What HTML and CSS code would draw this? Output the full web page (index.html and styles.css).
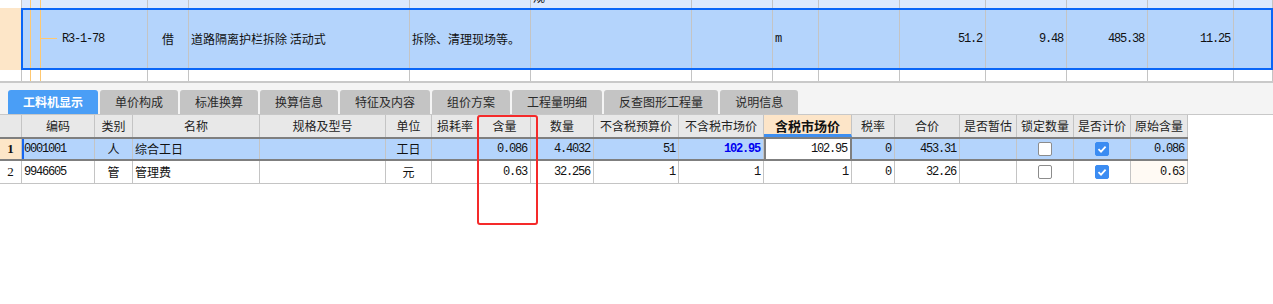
FILE: index.html
```html
<!DOCTYPE html>
<html lang="zh">
<head>
<meta charset="utf-8">
<title>工料机显示</title>
<link rel="stylesheet" href="styles.css">
</head>
<body>
<div class="top">
  <div class="trow ra">
    <div class="c gut"></div>
    <div class="c t1 tree"></div>
    <div class="c t2"></div>
    <div class="c t3"></div>
    <div class="c t4"></div>
    <div class="c t5 clip"><span class="peek">规</span></div>
    <div class="c t6"></div>
    <div class="c t7"></div>
    <div class="c t8"></div>
    <div class="c t9"></div>
    <div class="c t10"></div>
    <div class="c t11"></div>
    <div class="c t12"></div>
    <div class="c t13"></div>
  </div>
  <div class="trow rb">
    <div class="c gut peach"></div>
    <div class="c t1 tree branch"><span class="mono code">R3-1-78</span></div>
    <div class="c t2 ctr">借</div>
    <div class="c t3 pl">道路隔离护栏拆除 活动式</div>
    <div class="c t4 pl">拆除、清理现场等。</div>
    <div class="c t5"></div>
    <div class="c t6"></div>
    <div class="c t7 pl"><span class="mono">m</span></div>
    <div class="c t8"></div>
    <div class="c t9 num"><span class="mono">51.2</span></div>
    <div class="c t10 num"><span class="mono">9.48</span></div>
    <div class="c t11 num"><span class="mono">485.38</span></div>
    <div class="c t12 num"><span class="mono">11.25</span></div>
    <div class="c t13"></div>
  </div>
  <div class="trow rc">
    <div class="c gut"></div>
    <div class="c t1 tree"></div>
    <div class="c t2"></div>
    <div class="c t3"></div>
    <div class="c t4"></div>
    <div class="c t5"></div>
    <div class="c t6"></div>
    <div class="c t7"></div>
    <div class="c t8"></div>
    <div class="c t9"></div>
    <div class="c t10"></div>
    <div class="c t11"></div>
    <div class="c t12"></div>
    <div class="c t13"></div>
  </div>
</div>

<div class="tabs">
  <div class="tab active">工料机显示</div>
  <div class="tab">单价构成</div>
  <div class="tab">标准换算</div>
  <div class="tab">换算信息</div>
  <div class="tab">特征及内容</div>
  <div class="tab">组价方案</div>
  <div class="tab">工程量明细</div>
  <div class="tab">反查图形工程量</div>
  <div class="tab">说明信息</div>
</div>

<div class="grid">
  <div class="row head">
    <div class="g"></div>
    <div class="g">编码</div>
    <div class="g">类别</div>
    <div class="g">名称</div>
    <div class="g">规格及型号</div>
    <div class="g">单位</div>
    <div class="g">损耗率</div>
    <div class="g">含量</div>
    <div class="g">数量</div>
    <div class="g">不含税预算价</div>
    <div class="g">不含税市场价</div>
    <div class="g hot">含税市场价</div>
    <div class="g">税率</div>
    <div class="g">合价</div>
    <div class="g">是否暂估</div>
    <div class="g">锁定数量</div>
    <div class="g">是否计价</div>
    <div class="g">原始含量</div>
  </div>
  <div class="row r1">
    <div class="g rn peach bold">1</div>
    <div class="g l mark"><span class="mono">0001001</span></div>
    <div class="g">人</div>
    <div class="g l">综合工日</div>
    <div class="g"></div>
    <div class="g">工日</div>
    <div class="g"></div>
    <div class="g n"><span class="mono">0.086</span></div>
    <div class="g n"><span class="mono">4.4032</span></div>
    <div class="g n"><span class="mono">51</span></div>
    <div class="g n"><span class="mono blue">102.95</span></div>
    <div class="g n edit"><span class="mono">102.95</span></div>
    <div class="g n"><span class="mono">0</span></div>
    <div class="g n"><span class="mono">453.31</span></div>
    <div class="g"></div>
    <div class="g"><span class="cb"></span></div>
    <div class="g"><span class="cb on"><svg viewBox="0 0 14 14" width="14" height="14"><path d="M3.5 7.2 L6 9.6 L10.6 4.6" fill="none" stroke="#fff" stroke-width="1.8"/></svg></span></div>
    <div class="g n"><span class="mono">0.086</span></div>
  </div>
  <div class="row r2">
    <div class="g rn">2</div>
    <div class="g l"><span class="mono">9946605</span></div>
    <div class="g">管</div>
    <div class="g l">管理费</div>
    <div class="g"></div>
    <div class="g">元</div>
    <div class="g"></div>
    <div class="g n"><span class="mono">0.63</span></div>
    <div class="g n"><span class="mono">32.256</span></div>
    <div class="g n"><span class="mono">1</span></div>
    <div class="g n"><span class="mono">1</span></div>
    <div class="g n"><span class="mono">1</span></div>
    <div class="g n"><span class="mono">0</span></div>
    <div class="g n"><span class="mono">32.26</span></div>
    <div class="g"></div>
    <div class="g"><span class="cb"></span></div>
    <div class="g"><span class="cb on"><svg viewBox="0 0 14 14" width="14" height="14"><path d="M3.5 7.2 L6 9.6 L10.6 4.6" fill="none" stroke="#fff" stroke-width="1.8"/></svg></span></div>
    <div class="g n cream"><span class="mono">0.63</span></div>
  </div>
</div>

<div class="redbox"></div>
</body>
</html>
```

FILE: styles.css
```css
body {
  margin: 0;
  width: 1273px;
  height: 304px;
  overflow: hidden;
  position: relative;
  background: #fff;
  color: #111;
  font-family: "Noto Sans CJK SC", "Liberation Sans", sans-serif;
  font-size: 12px;
  line-height: 14px;
}

.mono {
  font-family: "Liberation Mono", "DejaVu Sans Mono", monospace;
  font-size: 12px;
  letter-spacing: -1.2px;
}

/* ---------- top tree grid ---------- */
.top {
  border-bottom: 2px solid #c9c9c9;
}
.trow {
  display: flex;
}
.ra { height: 8px; background: #dce9fd; }
.rb { height: 62px; background: #b4d4fc; position: relative; }
.rc { height: 11px; background: #fff; }

.rb::after {
  content: "";
  position: absolute;
  left: 21px;
  right: 0;
  top: 0;
  bottom: 0;
  border: 2px solid #0a66f7;
  pointer-events: none;
}

.c {
  box-sizing: border-box;
  flex: none;
  border-right: 1px solid #c4c4c4;
  display: flex;
  align-items: center;
  white-space: nowrap;
  overflow: hidden;
}
.gut { width: 22px; background: #fff; }
.gut.peach { background: #fde6c8; }
.t1 { width: 126px; }
.t2 { width: 41px; }
.t3 { width: 221px; }
.t4 { width: 121px; }
.t5 { width: 161px; }
.t6 { width: 81px; }
.t7 { width: 46px; }
.t8 { width: 81px; }
.t9 { width: 86px; }
.t10 { width: 81px; }
.t11 { width: 81px; }
.t12 { width: 86px; }
.t13 { flex: 1; }

.tree {
  background-image:
    linear-gradient(#ffc870, #ffc870),
    linear-gradient(#ffc870, #ffc870);
  background-repeat: no-repeat;
  background-position: 8px 0, 18px 0;
  background-size: 1px 100%, 1px 100%;
}
.tree.branch {
  background-image:
    linear-gradient(#ffc870, #ffc870),
    linear-gradient(#ffc870, #ffc870),
    linear-gradient(#ffc870, #ffc870);
  background-position: 8px 0, 18px 0, 18px 30px;
  background-size: 1px 100%, 1px 100%, 17px 1px;
}
.code { padding-left: 40px; }
.ctr { justify-content: center; }
.pl { padding-left: 2px; }
.num { justify-content: flex-end; padding-right: 3px; }

.clip { align-items: flex-start; }
.peek {
  display: block;
  margin-top: -10px;
  padding-left: 2px;
  font-size: 12px;
}

/* ---------- tabs ---------- */
.tabs {
  box-sizing: border-box;
  height: 32px;
  padding: 7px 0 0 8px;
  display: flex;
  gap: 2px;
  align-items: flex-end;
  background: #f4f4f4;
  border-bottom: 1px solid #c8c8c8;
}
.tab {
  height: 24px;
  padding: 0 15px;
  display: flex;
  align-items: center;
  border-radius: 3px 3px 0 0;
  background: #c4c4c4;
  color: #2a2a2a;
  font-size: 12px;
  white-space: nowrap;
}
.tab.active {
  background: #4a9ef6;
  color: #fff;
  font-weight: bold;
}

/* ---------- data grid ---------- */
.row {
  display: grid;
  grid-template-columns: 22px 73px 38px 127px 126px 46px 47px 52px 63px 85px 85px 88px 43px 65px 57px 57px 57px 57px;
  width: 1188px;
  box-sizing: border-box;
}
.g {
  box-sizing: border-box;
  border-right: 1px solid #c4c4c4;
  display: flex;
  align-items: center;
  justify-content: center;
  white-space: nowrap;
  overflow: hidden;
}
.head { height: 22px; }
.head .g {
  background: #e8e8e8;
  color: #222;
}
.head .hot {
  background: #fde5c8;
  font-weight: bold;
  font-size: 13px;
  color: #111;
  border-bottom: 3px solid #3f8ff0;
  padding-top: 2px;
}

.r1 {
  height: 24px;
  border-top: 2px solid #7f7f7f;
  border-bottom: 2px solid #7f7f7f;
}
.r1 .g { background: #b4d4fc; }
.r1 .peach { background: #fde6c8; }
.r1 .edit {
  background: #fff;
  border-left: 2px solid #7f7f7f;
  border-right: 2px solid #7f7f7f;
}
.r1 .mark { box-shadow: inset 2px 0 0 #1766f0; }

.r2 {
  height: 23px;
  border-bottom: 1px solid #c4c4c4;
}
.r2 .g { background: #fff; }
.r2 .cream { background: #fffaf4; }

.rn {
  font-family: "Liberation Serif", serif;
  font-size: 13px;
}
.bold { font-weight: bold; }
.l { justify-content: flex-start; padding-left: 2px; }
.n { justify-content: flex-end; padding-right: 3px; }
.blue { color: #0000f0; font-weight: bold; }

.cb {
  box-sizing: border-box;
  width: 14px;
  height: 14px;
  border: 1px solid #8c8c8c;
  border-radius: 2px;
  background: #fff;
  display: block;
}
.cb.on {
  background: #3b8cf2;
  border-color: #3b8cf2;
}
.cb svg { display: block; margin: -1px; }

/* annotation */
.redbox {
  position: absolute;
  left: 477px;
  top: 115px;
  width: 61px;
  height: 110px;
  box-sizing: border-box;
  border: 2px solid #f52a2a;
  border-radius: 3px;
  pointer-events: none;
}
```
